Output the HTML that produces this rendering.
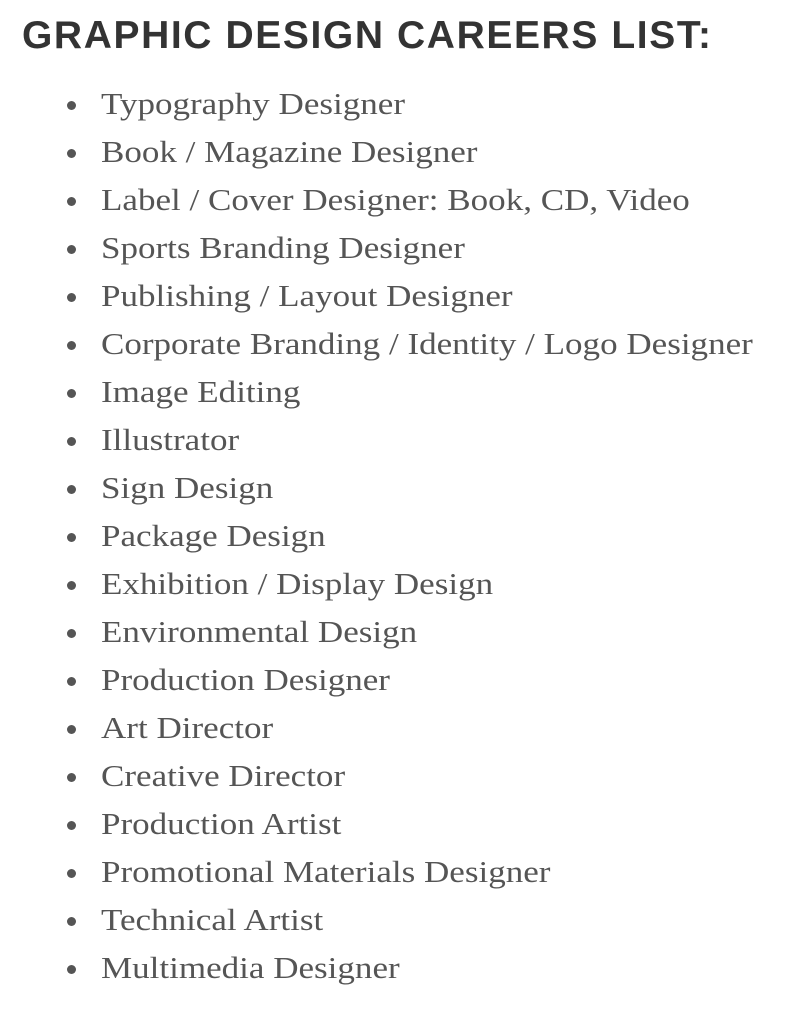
<!DOCTYPE html>
<html><head><style>
body{margin:0;background:#fff;width:806px;height:1016px;overflow:hidden}
h1{position:absolute;left:22px;top:14px;margin:0;font:bold 39px/44px "Liberation Sans",sans-serif;color:#333;letter-spacing:1.6px;white-space:nowrap}
ul{position:absolute;left:101px;top:80px;margin:0;padding:0;list-style:none;font:31px/48px "Liberation Serif",serif;color:#555}
li{position:relative;white-space:nowrap}
li span{display:inline-block;transform:scaleX(1.13);transform-origin:0 50%}
li:before{content:"";position:absolute;left:-34px;top:21px;width:9px;height:9px;border-radius:50%;background:#555}
</style></head><body>
<h1>GRAPHIC DESIGN CAREERS LIST:</h1>
<ul>
<li><span>Typography Designer</span></li>
<li><span>Book / Magazine Designer</span></li>
<li><span>Label / Cover Designer: Book, CD, Video</span></li>
<li><span>Sports Branding Designer</span></li>
<li><span>Publishing / Layout Designer</span></li>
<li><span>Corporate Branding / Identity / Logo Designer</span></li>
<li><span>Image Editing</span></li>
<li><span>Illustrator</span></li>
<li><span>Sign Design</span></li>
<li><span>Package Design</span></li>
<li><span>Exhibition / Display Design</span></li>
<li><span>Environmental Design</span></li>
<li><span>Production Designer</span></li>
<li><span>Art Director</span></li>
<li><span>Creative Director</span></li>
<li><span>Production Artist</span></li>
<li><span>Promotional Materials Designer</span></li>
<li><span>Technical Artist</span></li>
<li><span>Multimedia Designer</span></li>
</ul>
</body></html>
